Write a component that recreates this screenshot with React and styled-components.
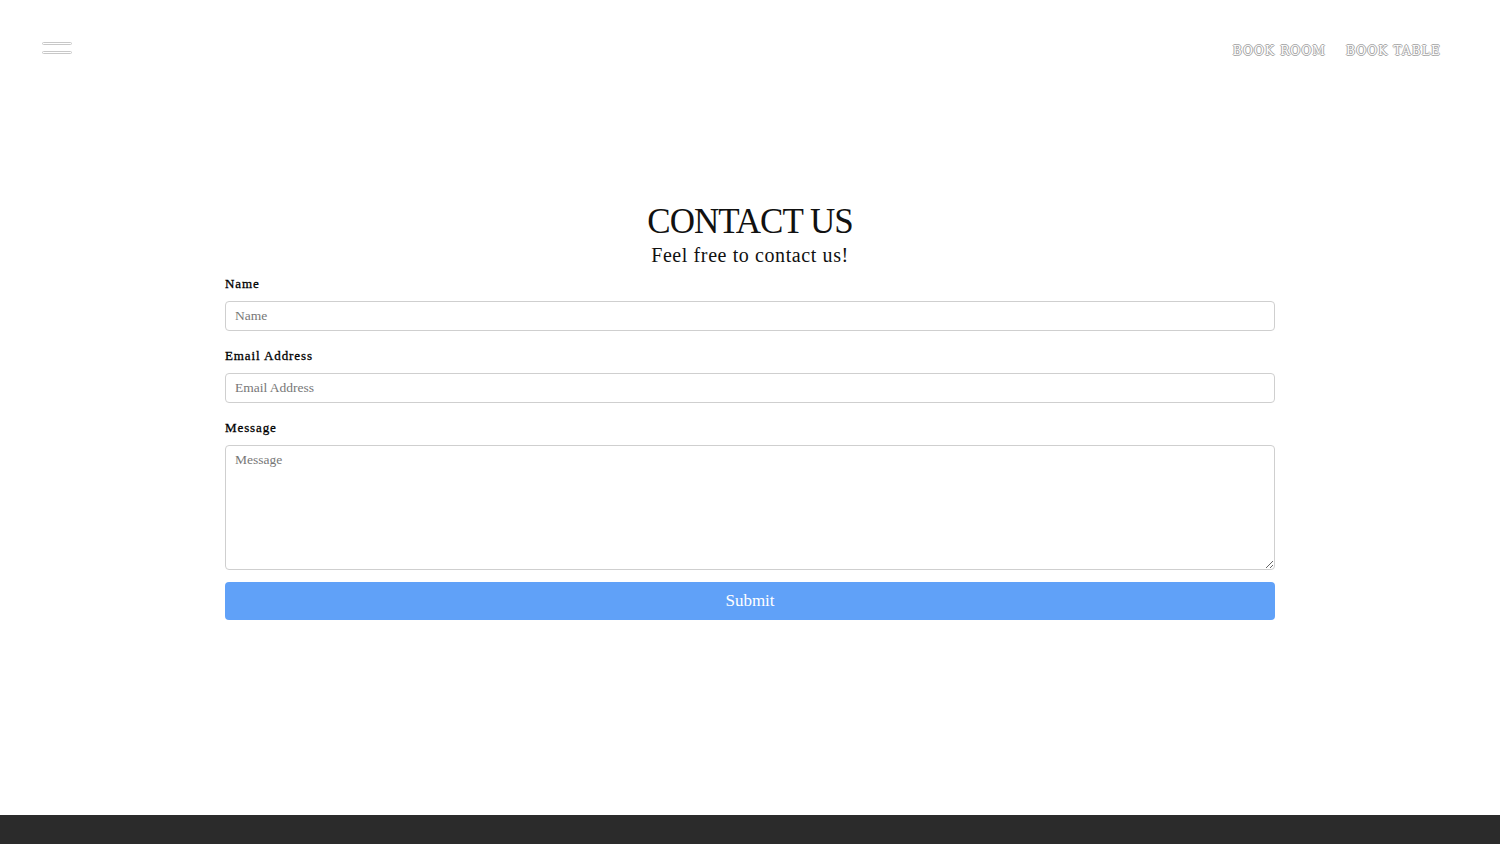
import * as React from "react";
import styled, { createGlobalStyle } from "styled-components";

const GlobalStyle = createGlobalStyle`
  body {
    margin: 0;
    background: #fff;
    font-family: "Liberation Serif", "DejaVu Serif", serif;
    color: #111;
  }
  * {
    box-sizing: border-box;
  }
`;

const Header = styled.header`
  display: flex;
  justify-content: space-between;
  align-items: center;
  height: 100px;
  padding: 0 59px 0 42px;
`;

const Burger = styled.button`
  display: flex;
  flex-direction: column;
  gap: 6px;
  width: 30px;
  padding: 0;
  border: none;
  background: none;
  cursor: pointer;
  margin-top: -4px;
`;

const BurgerLine = styled.span`
  display: block;
  height: 3px;
  width: 100%;
  border: 1px solid #c8c8c8;
  border-radius: 2px;
  background: #fff;
`;

const Nav = styled.nav`
  display: flex;
  gap: 20px;
  margin-top: 1px;
`;

const NavLink = styled.a`
  font-family: "DejaVu Serif", "Liberation Serif", serif;
  font-size: 12px;
  letter-spacing: 1.2px;
  text-transform: uppercase;
  color: #fff;
  text-shadow: 1px 0 0 #a8a8a8, -1px 0 0 #a8a8a8, 0 1px 0 #a8a8a8,
    0 -1px 0 #a8a8a8;
  text-decoration: none;
  cursor: pointer;
`;

const Main = styled.main`
  min-height: 715px;
  padding-top: 102px;
`;

const Container = styled.div`
  width: 1050px;
  margin: 0 auto;
`;

const Title = styled.h1`
  margin: 0;
  text-align: center;
  font-size: 35px;
  font-weight: normal;
  letter-spacing: -1px;
  line-height: 40px;
`;

const Subtitle = styled.p`
  margin: 0 0 7px;
  text-align: center;
  font-size: 20px;
  letter-spacing: 0.6px;
  line-height: 26px;
`;

const Form = styled.form`
  display: flex;
  flex-direction: column;
`;

const Group = styled.div`
  display: flex;
  flex-direction: column;
  margin-bottom: 16px;
`;

const Label = styled.label`
  font-size: 13px;
  font-weight: normal;
  letter-spacing: 0.9px;
  line-height: 18px;
  margin-bottom: 8px;
  color: #000;
  -webkit-text-stroke: 0.3px #000;
`;

const fieldCss = `
  width: 100%;
  font-family: "Liberation Serif", "DejaVu Serif", serif;
  font-size: 13.5px;
  color: #333;
  border: 1px solid #cfcfcf;
  border-radius: 4px;
  padding: 6px 9px;
  outline: none;
  background: #fff;
  &::placeholder {
    color: #777;
  }
`;

const Input = styled.input`
  ${fieldCss}
  height: 30px;
`;

const TextArea = styled.textarea`
  ${fieldCss}
  height: 125px;
  resize: vertical;
  display: block;
`;

const Submit = styled.button`
  margin-top: -4px;
  height: 38px;
  border: none;
  border-radius: 4px;
  background: #60a1f8;
  color: #fff;
  font-family: "Liberation Serif", "DejaVu Serif", serif;
  font-size: 17px;
  cursor: pointer;
`;

const Footer = styled.footer`
  height: 200px;
  background: #2b2b2b;
`;

export default function App() {
  return (
    <>
      <GlobalStyle />
      <Header>
        <Burger aria-label="menu">
          <BurgerLine />
          <BurgerLine />
        </Burger>
        <Nav>
          <NavLink>Book Room</NavLink>
          <NavLink>Book Table</NavLink>
        </Nav>
      </Header>
      <Main>
        <Container>
          <Title>CONTACT US</Title>
          <Subtitle>Feel free to contact us!</Subtitle>
          <Form onSubmit={(e) => e.preventDefault()}>
            <Group>
              <Label>Name</Label>
              <Input placeholder="Name" />
            </Group>
            <Group>
              <Label>Email Address</Label>
              <Input placeholder="Email Address" />
            </Group>
            <Group>
              <Label>Message</Label>
              <TextArea placeholder="Message" />
            </Group>
            <Submit type="submit">Submit</Submit>
          </Form>
        </Container>
      </Main>
      <Footer />
    </>
  );
}
